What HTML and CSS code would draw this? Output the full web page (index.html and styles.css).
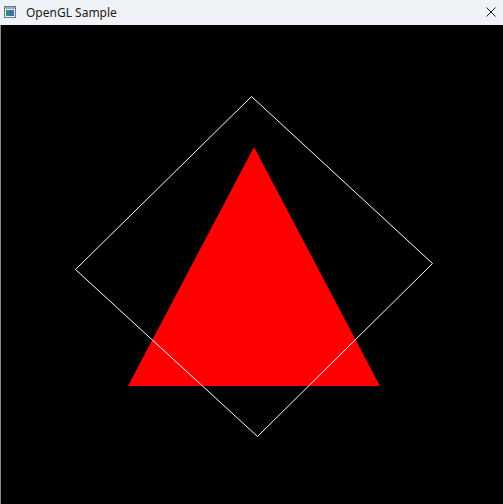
FILE: index.html
```html
<!DOCTYPE html>
<html>
<head>
<meta charset="utf-8">
<link rel="stylesheet" href="styles.css">
</head>
<body>
<div class="window">
  <div class="titlebar">
    <svg class="app-icon" width="12" height="12" viewBox="0 0 12 12">
      <rect x="0.5" y="0.5" width="11" height="11" fill="#e8eef4" stroke="#6a7a8a"/>
      <rect x="1" y="1" width="10" height="2" fill="#9ab"/>
      <rect x="2" y="4" width="3" height="6" fill="#2f8f6f"/>
      <rect x="5" y="4" width="5" height="6" fill="#3a6fb0"/>
    </svg>
    <span class="title">OpenGL Sample</span>
    <svg class="close" width="10" height="10" viewBox="0 0 10 10">
      <path d="M0.5 0.5 L9.5 9.5 M9.5 0.5 L0.5 9.5" stroke="#1a1a1a" stroke-width="1"/>
    </svg>
  </div>
  <div class="client">
    <svg class="scene" width="502" height="479" viewBox="1 25 502 479">
      <polygon points="254,147 128,386 380,386" fill="#ff0000"/>
      <polygon points="251.5,96.5 432.5,263.5 257.5,436.5 75.5,269.5" fill="none" stroke="#ffffff" stroke-width="1"/>
    </svg>
  </div>
</div>
</body>
</html>
```

FILE: styles.css
```css
html, body {
  margin: 0;
  padding: 0;
  width: 503px;
  height: 504px;
  overflow: hidden;
  background: #000;
}
.window {
  display: flex;
  flex-direction: column;
  width: 503px;
  height: 504px;
}
.titlebar {
  height: 25px;
  flex: none;
  display: flex;
  align-items: center;
  background: #eff3f8;
  font-family: "Noto Sans", "Open Sans", sans-serif;
  font-size: 12px;
  color: #1a1a1a;
  padding-left: 4px;
  box-sizing: border-box;
}
.app-icon {
  flex: none;
  margin-top: -1px;
}
.title {
  margin-left: 10px;
  flex: 1;
  margin-top: -1px;
}
.close {
  flex: none;
  margin-right: 7px;
  margin-top: -1px;
}
.client {
  flex: 1;
  display: flex;
  border-left: 1px solid #8a8a8a;
  background: #000;
  overflow: hidden;
}
.scene {
  display: block;
}
```
